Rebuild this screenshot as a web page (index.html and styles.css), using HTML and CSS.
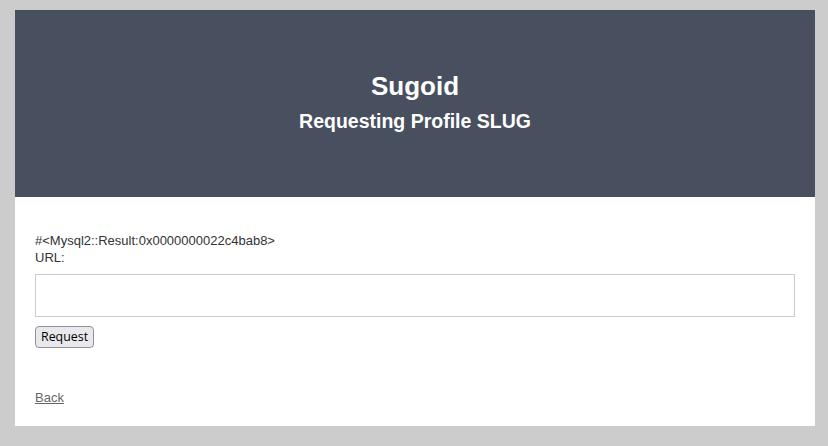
FILE: index.html
```html
<!DOCTYPE html>
<html>
<head>
<meta charset="utf-8">
<link rel="stylesheet" href="styles.css">
</head>
<body>
<div class="wrap">
  <header class="hero">
    <h1 class="title">Sugoid</h1>
    <h2 class="subtitle">Requesting Profile SLUG</h2>
  </header>
  <main class="content">
    <div class="result">#&lt;Mysql2::Result:0x0000000022c4bab8&gt;</div>
    <form class="form">
      <label class="label" for="url">URL:</label>
      <input class="field" id="url" type="text">
      <div class="actions"><button class="btn" type="button">Request</button></div>
    </form>
    <a class="back" href="#">Back</a>
  </main>
</div>
</body>
</html>
```

FILE: styles.css
```css
html, body {
  margin: 0;
  padding: 0;
}
body {
  background: #cccccc;
  padding: 10px 13px 20px 15px;
  font-family: "Liberation Sans", Arial, sans-serif;
  font-size: 13px;
  color: #333333;
}
.wrap {
  background: #ffffff;
}
.hero {
  background: #484f5e;
  color: #ffffff;
  height: 187px;
  box-sizing: border-box;
  padding-top: 61px;
  text-align: center;
}
.title {
  margin: 0;
  font-size: 26px;
  line-height: 30px;
  font-weight: bold;
}
.subtitle {
  margin: 8px 0 0;
  font-size: 19.5px;
  line-height: 24px;
  font-weight: bold;
}
.content {
  padding: 35px 20px 20px;
}
.result, .label {
  display: block;
  line-height: 17px;
}
.field {
  display: block;
  box-sizing: border-box;
  width: 100%;
  height: 43px;
  margin: 8px 0 9px;
  border: 1px solid #cccccc;
  padding: 0 8px;
  font-size: 14px;
}
.actions {
  display: flex;
}
.btn {
  box-sizing: border-box;
  height: 22px;
  padding: 0 5px;
  font-family: "Open Sans", "Noto Sans", sans-serif;
  font-size: 12.4px;
  line-height: 18px;
  color: #000000;
  background: #e9e9ed;
  border: 1px solid #8f8f9d;
  border-radius: 4px;
}
.back {
  display: inline-block;
  margin-top: 41px;
  color: #666666;
  line-height: 17px;
}
```
